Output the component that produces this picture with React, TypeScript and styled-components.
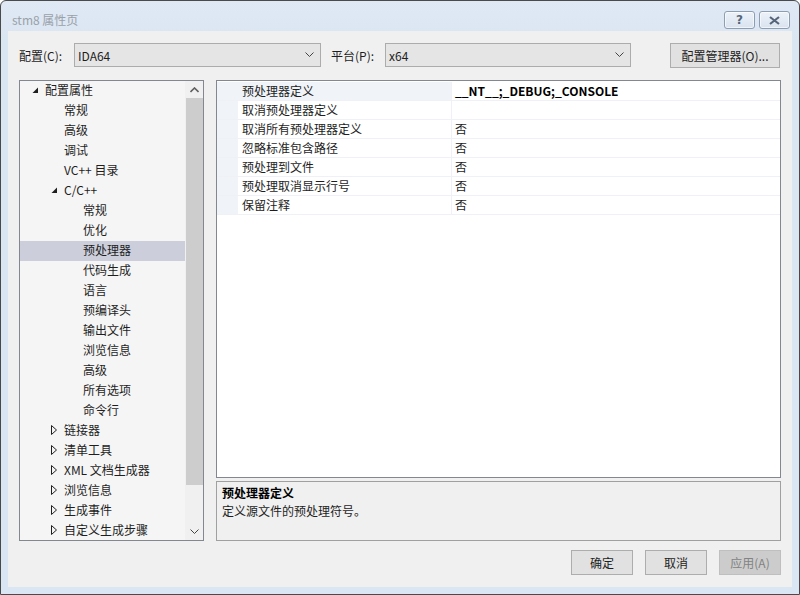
import * as React from "react";
import styled, { createGlobalStyle, css } from "styled-components";

const GlobalStyle = createGlobalStyle`
  html, body {
    margin: 0;
    padding: 0;
    background: #ffffff;
  }
  body {
    font-family: "Noto Sans CJK SC", "Noto Sans", sans-serif;
    font-size: 12px;
    color: #1e1e1e;
  }
`;

const Window = styled.div`
  width: 800px;
  height: 595px;
  box-sizing: border-box;
  border: 1px solid #4a4a4a;
  border-radius: 6px 6px 0 0;
  background: linear-gradient(#dfe9f5, #dbe6f3 40px, #dae6f3);
  display: flex;
  flex-direction: column;
  overflow: hidden;
`;

const TitleBar = styled.div`
  height: 30px;
  display: flex;
  align-items: center;
  padding: 0 9px 0 11px;
  flex-shrink: 0;
`;

const TitleText = styled.div`
  font-size: 12px;
  color: #9aa1a8;
  flex: 1;
  padding-top: 6px;
`;

const CaptionButton = styled.div`
  width: 29px;
  height: 16px;
  border: 1px solid #8d9db2;
  border-radius: 3px;
  background: linear-gradient(#edf2f9, #d9e3ef);
  margin-left: 4px;
  margin-top: 8px;
  display: flex;
  align-items: center;
  justify-content: center;
  color: #56667a;
  font-family: "DejaVu Sans", sans-serif;
  font-size: 12px;
  font-weight: bold;
  box-shadow: inset 0 0 0 1px rgba(255, 255, 255, 0.6);
`;

const Body = styled.div`
  flex: 1;
  margin: 0 7px 7px 7px;
  background: #f0f0f0;
  padding: 12px 11px 11px 11px;
  display: flex;
  flex-direction: column;
`;

const TopRow = styled.div`
  display: flex;
  align-items: center;
  height: 24px;
  margin-bottom: 13px;
`;

const Label = styled.span<{ $w: number }>`
  width: ${(p) => p.$w}px;
  flex-shrink: 0;
  font-size: 12px;
  color: #1e1e1e;
`;

const Select = styled.div<{ $w: number }>`
  width: ${(p) => p.$w}px;
  height: 24px;
  box-sizing: border-box;
  border: 1px solid #acacac;
  background: #e5e5e5;
  display: flex;
  align-items: center;
  padding: 0 6px 0 3px;
  margin-right: 10px;
  font-size: 12px;
`;

const SelectText = styled.span`
  flex: 1;
`;

const PushButton = styled.div<{ $disabled?: boolean }>`
  height: 25px;
  box-sizing: border-box;
  border: 1px solid #adadad;
  background: #e1e1e1;
  display: flex;
  align-items: center;
  justify-content: center;
  font-size: 12px;
  color: #1e1e1e;
  ${(p) =>
    p.$disabled &&
    css`
      background: #cccccc;
      border-color: #bfbfbf;
      color: #838383;
    `}
`;

const ManagerButton = styled(PushButton)`
  width: 110px;
  margin-left: auto;
  margin-right: 1px;
`;

const Main = styled.div`
  display: flex;
  gap: 12px;
  height: 461px;
`;

const TreePanel = styled.div`
  width: 185px;
  box-sizing: border-box;
  border: 1px solid #828790;
  background: #f5f5f5;
  display: flex;
  overflow: hidden;
`;

const TreeList = styled.div`
  flex: 1;
  overflow: hidden;
`;

const TreeRow = styled.div<{ $level: number; $selected?: boolean }>`
  height: 20px;
  line-height: 18px;
  display: flex;
  align-items: flex-start;
  padding-left: ${(p) => 7 + p.$level * 19}px;
  background: ${(p) => (p.$selected ? "#cccedb" : "transparent")};
  white-space: nowrap;
  color: #1e1e1e;
`;

const Toggle = styled.span`
  width: 16px;
  height: 18px;
  display: flex;
  align-items: center;
  justify-content: center;
  margin-right: 2px;
  flex-shrink: 0;
`;

const ScrollBar = styled.div`
  width: 17px;
  background: #f0f0f0;
  border-left: 1px solid #f0f0f0;
  display: flex;
  flex-direction: column;
  align-items: center;
`;

const ScrollArrow = styled.div`
  height: 17px;
  width: 17px;
  display: flex;
  align-items: center;
  justify-content: center;
  flex-shrink: 0;
`;

const ScrollTrack = styled.div`
  flex: 1;
  width: 17px;
  display: flex;
  flex-direction: column;
`;

const ScrollThumb = styled.div`
  height: 387px;
  background: #cdcdcd;
`;

const RightColumn = styled.div`
  flex: 1;
  display: flex;
  flex-direction: column;
  gap: 3px;
`;

const Grid = styled.div`
  height: 398px;
  box-sizing: border-box;
  border: 1px solid #828790;
  background: #ffffff;
  padding-top: 1px;
`;

const PropRow = styled.div`
  display: flex;
  height: 19px;
  box-sizing: border-box;
  border-bottom: 1px solid #f0f0f7;
`;

const Gutter = styled.div`
  width: 21px;
  background: #f0f4f9;
  flex-shrink: 0;
`;

const NameCell = styled.div<{ $active?: boolean }>`
  width: 214px;
  box-sizing: border-box;
  padding-left: 4px;
  line-height: 18px;
  border-right: 1px solid #f0f0f7;
  background: ${(p) => (p.$active ? "#f0f4f9" : "#ffffff")};
  color: #1e1e1e;
  white-space: nowrap;
`;

const ValueCell = styled.div<{ $bold?: boolean }>`
  flex: 1;
  padding-left: 3px;
  line-height: 18px;
  font-weight: ${(p) => (p.$bold ? 700 : 400)};
  color: ${(p) => (p.$bold ? "#000000" : "#1e1e1e")};
  white-space: nowrap;
`;

const DescPanel = styled.div`
  height: 60px;
  box-sizing: border-box;
  border: 1px solid #a0a0a0;
  background: #f0f0f0;
  padding: 2px 5px;
`;

const DescTitle = styled.div`
  font-weight: 700;
  line-height: 18px;
  color: #000000;
`;

const DescText = styled.div`
  line-height: 18px;
  color: #1e1e1e;
`;

const Footer = styled.div`
  display: flex;
  justify-content: flex-end;
  gap: 12px;
  margin-top: 9px;
`;

const FooterButton = styled(PushButton)`
  width: 62px;
`;

const Chevron = ({ dir = "down" }: { dir?: "down" | "up" }) => (
  <svg width="9" height="6" viewBox="0 0 9 6">
    <polyline
      points={dir === "down" ? "0.5,0.5 4.5,4.5 8.5,0.5" : "0.5,5 4.5,1 8.5,5"}
      fill="none"
      stroke={dir === "down" ? "#444" : "#606060"}
      strokeWidth={dir === "down" ? 1 : 1.6}
    />
  </svg>
);

const Expanded = () => (
  <svg width="7" height="7" viewBox="0 0 7 7">
    <polygon points="6,0.5 6,6 0.5,6" fill="#1e1e1e" />
  </svg>
);

const Collapsed = () => (
  <svg width="6" height="10" viewBox="0 0 6 10">
    <polygon points="0.5,0.5 5.5,5 0.5,9.5" fill="none" stroke="#1e1e1e" strokeWidth="1" />
  </svg>
);

type Node = { label: string; level: number; toggle?: "open" | "closed"; selected?: boolean };

const tree: Node[] = [
  { label: "配置属性", level: 0, toggle: "open" },
  { label: "常规", level: 1 },
  { label: "高级", level: 1 },
  { label: "调试", level: 1 },
  { label: "VC++ 目录", level: 1 },
  { label: "C/C++", level: 1, toggle: "open" },
  { label: "常规", level: 2 },
  { label: "优化", level: 2 },
  { label: "预处理器", level: 2, selected: true },
  { label: "代码生成", level: 2 },
  { label: "语言", level: 2 },
  { label: "预编译头", level: 2 },
  { label: "输出文件", level: 2 },
  { label: "浏览信息", level: 2 },
  { label: "高级", level: 2 },
  { label: "所有选项", level: 2 },
  { label: "命令行", level: 2 },
  { label: "链接器", level: 1, toggle: "closed" },
  { label: "清单工具", level: 1, toggle: "closed" },
  { label: "XML 文档生成器", level: 1, toggle: "closed" },
  { label: "浏览信息", level: 1, toggle: "closed" },
  { label: "生成事件", level: 1, toggle: "closed" },
  { label: "自定义生成步骤", level: 1, toggle: "closed" },
];

const props: [string, string][] = [
  ["预处理器定义", "__NT__;_DEBUG;_CONSOLE"],
  ["取消预处理器定义", ""],
  ["取消所有预处理器定义", "否"],
  ["忽略标准包含路径", "否"],
  ["预处理到文件", "否"],
  ["预处理取消显示行号", "否"],
  ["保留注释", "否"],
];

const App = () => (
  <>
    <GlobalStyle />
    <Window>
      <TitleBar>
        <TitleText>stm8 属性页</TitleText>
        <CaptionButton>?</CaptionButton>
        <CaptionButton>
          <svg width="11" height="9" viewBox="0 0 11 9">
            <path d="M1,1 L10,8 M10,1 L1,8" stroke="#56667a" strokeWidth="2.2" />
          </svg>
        </CaptionButton>
      </TitleBar>
      <Body>
        <TopRow>
          <Label $w={55}>配置(C):</Label>
          <Select $w={247}>
            <SelectText>IDA64</SelectText>
            <Chevron />
          </Select>
          <Label $w={54}>平台(P):</Label>
          <Select $w={246}>
            <SelectText>x64</SelectText>
            <Chevron />
          </Select>
          <ManagerButton>配置管理器(O)...</ManagerButton>
        </TopRow>
        <Main>
          <TreePanel>
            <TreeList>
              {tree.map((n, i) => (
                <TreeRow key={i} $level={n.level} $selected={n.selected}>
                  <Toggle>
                    {n.toggle === "open" && <Expanded />}
                    {n.toggle === "closed" && <Collapsed />}
                  </Toggle>
                  {n.label}
                </TreeRow>
              ))}
            </TreeList>
            <ScrollBar>
              <ScrollArrow>
                <Chevron dir="up" />
              </ScrollArrow>
              <ScrollTrack>
                <ScrollThumb />
              </ScrollTrack>
              <ScrollArrow>
                <Chevron />
              </ScrollArrow>
            </ScrollBar>
          </TreePanel>
          <RightColumn>
            <Grid>
              {props.map(([name, value], i) => (
                <PropRow key={i}>
                  <Gutter />
                  <NameCell $active={i === 0}>{name}</NameCell>
                  <ValueCell $bold={i === 0}>{value}</ValueCell>
                </PropRow>
              ))}
            </Grid>
            <DescPanel>
              <DescTitle>预处理器定义</DescTitle>
              <DescText>定义源文件的预处理符号。</DescText>
            </DescPanel>
          </RightColumn>
        </Main>
        <Footer>
          <FooterButton>确定</FooterButton>
          <FooterButton>取消</FooterButton>
          <FooterButton $disabled>应用(A)</FooterButton>
        </Footer>
      </Body>
    </Window>
  </>
);

export default App;
